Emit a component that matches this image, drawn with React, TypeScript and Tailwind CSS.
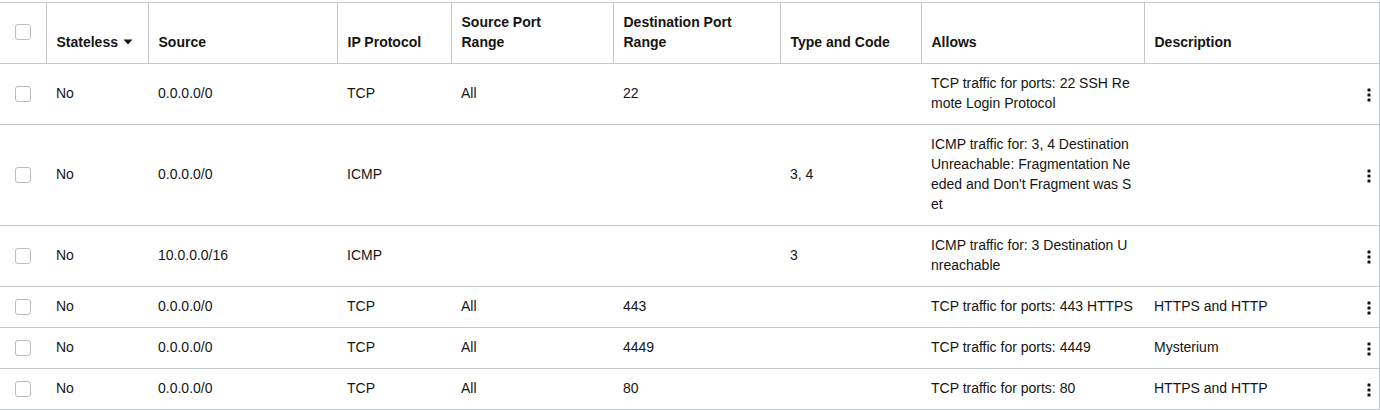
import React from "react";

type Rule = {
  stateless: string;
  source: string;
  protocol: string;
  srcPort: string;
  dstPort: string;
  typeCode: string;
  allows: string;
  description: string;
};

const RULES: Rule[] = [
  { stateless: "No", source: "0.0.0.0/0", protocol: "TCP", srcPort: "All", dstPort: "22", typeCode: "", allows: "TCP traffic for ports: 22 SSH Remote Login Protocol", description: "" },
  { stateless: "No", source: "0.0.0.0/0", protocol: "ICMP", srcPort: "", dstPort: "", typeCode: "3, 4", allows: "ICMP traffic for: 3, 4 Destination Unreachable: Fragmentation Needed and Don't Fragment was Set", description: "" },
  { stateless: "No", source: "10.0.0.0/16", protocol: "ICMP", srcPort: "", dstPort: "", typeCode: "3", allows: "ICMP traffic for: 3 Destination Unreachable", description: "" },
  { stateless: "No", source: "0.0.0.0/0", protocol: "TCP", srcPort: "All", dstPort: "443", typeCode: "", allows: "TCP traffic for ports: 443 HTTPS", description: "HTTPS and HTTP" },
  { stateless: "No", source: "0.0.0.0/0", protocol: "TCP", srcPort: "All", dstPort: "4449", typeCode: "", allows: "TCP traffic for ports: 4449", description: "Mysterium" },
  { stateless: "No", source: "0.0.0.0/0", protocol: "TCP", srcPort: "All", dstPort: "80", typeCode: "", allows: "TCP traffic for ports: 80", description: "HTTPS and HTTP" },
];

const Checkbox = () => (
  <span className="block w-4 h-4 rounded-[3px] border border-[#b9bcc0] bg-white" />
);

const Kebab = () => (
  <svg width="4" height="15" viewBox="0 0 4 15" className="inline-block">
    <rect x="0.5" y="0.5" width="3" height="3" rx="0.6" fill="#161513" />
    <rect x="0.5" y="5.5" width="3" height="3" rx="0.6" fill="#161513" />
    <rect x="0.5" y="10.5" width="3" height="3" rx="0.6" fill="#161513" />
  </svg>
);

const th = "border-l border-[#c4c7cb] px-[10px] pt-[9px] pb-[11px] text-left align-bottom font-bold";
const td = "px-[10px] pt-[9px] pb-[11px] align-middle";

export default function App() {
  return (
    <div
      className="w-[1380px] h-[410px] bg-white pt-[2px] text-[14px] leading-5 text-[#161513]"
      style={{ fontFamily: '"Liberation Sans", Arial, sans-serif' }}
    >
      <table className="w-[1379px] table-fixed border-collapse border-r border-[#c4c7cb]">
        <colgroup>
          <col className="w-[46px]" />
          <col className="w-[102px]" />
          <col className="w-[189px]" />
          <col className="w-[114px]" />
          <col className="w-[162px]" />
          <col className="w-[167px]" />
          <col className="w-[141px]" />
          <col className="w-[223px]" />
          <col className="w-[201px]" />
          <col className="w-[34px]" />
        </colgroup>
        <thead>
          <tr className="border-t border-b border-[#c4c7cb]">
            <th className="pl-[15px] align-middle">
              <div className="-mt-[2px]">
                <Checkbox />
              </div>
            </th>
            <th className={th}>
              <span className="inline-flex items-center gap-[5px]">
                Stateless
                <svg width="10" height="6" viewBox="0 0 10 6">
                  <path d="M0.5 0.5 L9.5 0.5 L5 5.5 Z" fill="#161513" />
                </svg>
              </span>
            </th>
            <th className={th}>Source</th>
            <th className={th}>IP Protocol</th>
            <th className={th}>
              Source Port
              <br />
              Range
            </th>
            <th className={th}>
              Destination Port
              <br />
              Range
            </th>
            <th className={th}>Type and Code</th>
            <th className={th}>Allows</th>
            <th className={th}>Description</th>
            <th />
          </tr>
        </thead>
        <tbody>
          {RULES.map((r, i) => (
            <tr key={i} className="border-b border-[#c4c7cb]">
              <td className="pl-[15px] align-middle">
                <Checkbox />
              </td>
              <td className={td}>{r.stateless}</td>
              <td className={td}>{r.source}</td>
              <td className={td}>{r.protocol}</td>
              <td className={td}>{r.srcPort}</td>
              <td className={td}>{r.dstPort}</td>
              <td className={td}>{r.typeCode}</td>
              <td className={`${td} break-all`}>{r.allows}</td>
              <td className={td}>{r.description}</td>
              <td className="pr-[8px] text-right align-middle">
                <Kebab />
              </td>
            </tr>
          ))}
        </tbody>
      </table>
    </div>
  );
}
